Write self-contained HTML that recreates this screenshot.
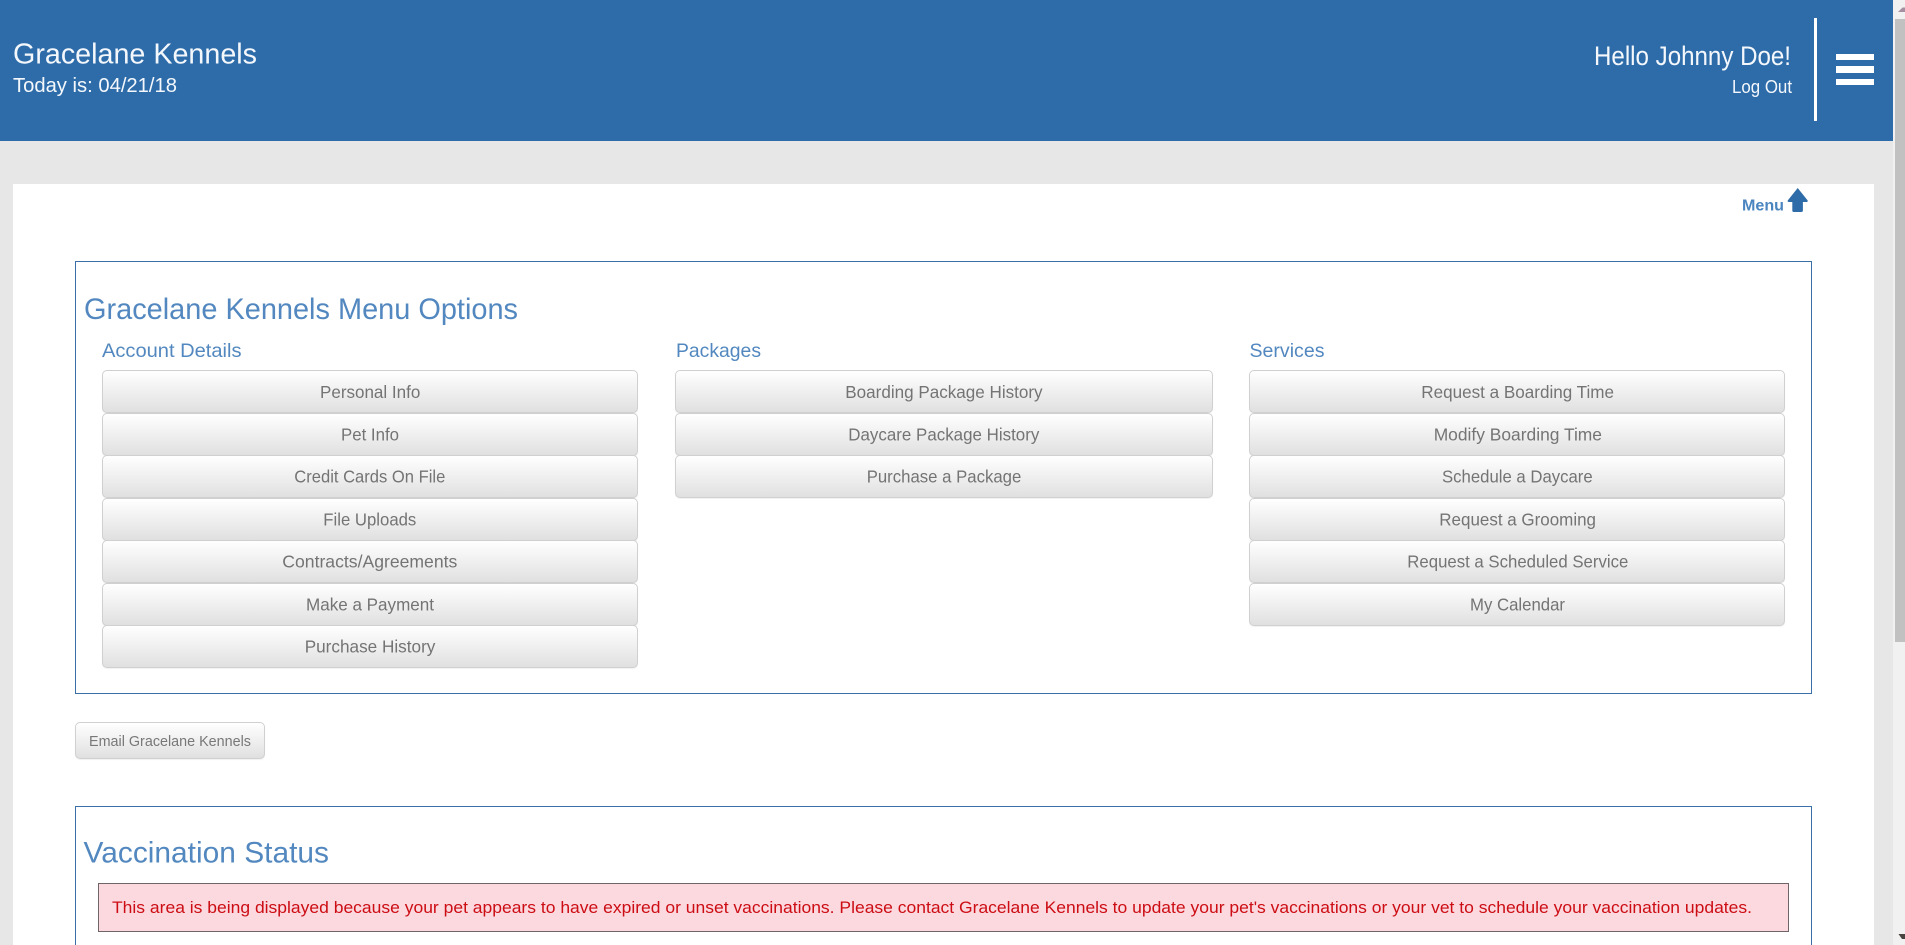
<!DOCTYPE html>
<html lang="en">
<head>
<meta charset="utf-8">
<title>Gracelane Kennels</title>
<style>
html,body{margin:0;padding:0;width:1905px;height:945px;overflow:hidden;background:#e7e7e7;font-family:"Liberation Sans",Arial,sans-serif}
#p{position:absolute;left:0;top:0;width:1905px;height:945px;overflow:hidden}
.a{position:absolute;box-sizing:border-box}
.btn{position:absolute;box-sizing:border-box;height:43px;border:1px solid #d0d0d0;border-radius:5px;background:linear-gradient(to bottom,#fff 0,#e0e0e0 100%);box-shadow:0 1px 1px rgba(0,0,0,.06)}
.c1{left:102px;width:536px}
.c2{left:675px;width:538px}
.c3{left:1249px;width:536px}
svg text{font-family:"Liberation Sans",Arial,sans-serif}
.w{fill:#f4f8fc}
.b{fill:#5288bf}
.g{fill:#747474;font-size:17.7px}
</style>
</head>
<body>
<div id="p">
<div class="a" style="left:0;top:0;width:1893px;height:141px;background:#2e6ca9"></div>
<div class="a" style="left:1814px;top:18px;width:3px;height:103px;background:#fff"></div>
<div class="a" style="left:1836px;top:54px;width:38px;height:6px;background:#fff"></div>
<div class="a" style="left:1836px;top:66px;width:38px;height:7px;background:#fff"></div>
<div class="a" style="left:1836px;top:79px;width:38px;height:6px;background:#fff"></div>

<div class="a" style="left:1893px;top:0;width:12px;height:945px;background:#f1f1f1"></div>
<div class="a" style="left:1895px;top:19px;width:10px;height:623px;background:#c1c1c1"></div>

<div class="a" style="left:13px;top:184px;width:1861px;height:761px;background:#fff"></div>

<div class="a" style="left:75px;top:261px;width:1737px;height:433px;border:1px solid #3a6fa8"></div>
<div class="a" style="left:75px;top:806px;width:1737px;height:139px;border:1px solid #3a6fa8;border-bottom:0"></div>

<div class="btn c1" style="top:370px"></div>
<div class="btn c1" style="top:412.5px"></div>
<div class="btn c1" style="top:455px"></div>
<div class="btn c1" style="top:497.5px"></div>
<div class="btn c1" style="top:540px"></div>
<div class="btn c1" style="top:582.5px"></div>
<div class="btn c1" style="top:625px"></div>

<div class="btn c2" style="top:370px"></div>
<div class="btn c2" style="top:412.5px"></div>
<div class="btn c2" style="top:455px"></div>

<div class="btn c3" style="top:370px"></div>
<div class="btn c3" style="top:412.5px"></div>
<div class="btn c3" style="top:455px"></div>
<div class="btn c3" style="top:497.5px"></div>
<div class="btn c3" style="top:540px"></div>
<div class="btn c3" style="top:582.5px"></div>

<div class="btn" style="left:75px;top:722px;width:190px;height:37px"></div>

<div class="a" style="left:98px;top:883px;width:1691px;height:49px;background:#fcd9df;border:1px solid #6f6468"></div>

<svg class="a" style="left:0;top:0" width="1905" height="945" viewBox="0 0 1905 945" xmlns="http://www.w3.org/2000/svg">
  <text class="w" x="13" y="63.3" font-size="29" textLength="244" lengthAdjust="spacingAndGlyphs">Gracelane Kennels</text>
  <text class="w" x="13" y="92" font-size="20" textLength="164" lengthAdjust="spacingAndGlyphs">Today is: 04/21/18</text>
  <text class="w" x="1594" y="65" font-size="26.5" textLength="197" lengthAdjust="spacingAndGlyphs">Hello Johnny Doe!</text>
  <text class="w" x="1732" y="93" font-size="18.3" textLength="60" lengthAdjust="spacingAndGlyphs">Log Out</text>

  <text x="1742" y="210.5" font-size="15.3" font-weight="700" fill="#4a85bf" textLength="42" lengthAdjust="spacingAndGlyphs">Menu</text>
  <path d="M1797.7 188 L1807.7 200.5 Q1808 202 1806.5 202 L1802.9 202 L1802.9 210.5 Q1802.9 212 1801.4 212 L1793.8 212 Q1792.3 212 1792.3 210.5 L1792.3 202 L1788.9 202 Q1787.4 202 1787.7 200.5 Z" fill="#2e6ca9"/>

  <text class="b" x="84" y="319" font-size="30" textLength="434" lengthAdjust="spacingAndGlyphs">Gracelane Kennels Menu Options</text>
  <text class="b" x="102" y="357" font-size="19.5" textLength="139.5" lengthAdjust="spacingAndGlyphs">Account Details</text>
  <text class="b" x="676" y="357" font-size="19.5" textLength="85" lengthAdjust="spacingAndGlyphs">Packages</text>
  <text class="b" x="1249.5" y="357" font-size="19.5" textLength="75" lengthAdjust="spacingAndGlyphs">Services</text>

  <text class="g" x="320" y="398" textLength="100.3" lengthAdjust="spacingAndGlyphs">Personal Info</text>
  <text class="g" x="341" y="440.7" textLength="58" lengthAdjust="spacingAndGlyphs">Pet Info</text>
  <text class="g" x="294.3" y="482.6" textLength="151" lengthAdjust="spacingAndGlyphs">Credit Cards On File</text>
  <text class="g" x="323.3" y="525.7" textLength="93" lengthAdjust="spacingAndGlyphs">File Uploads</text>
  <text class="g" x="282.3" y="567.6" textLength="175" lengthAdjust="spacingAndGlyphs">Contracts/Agreements</text>
  <text class="g" x="306" y="610.7" textLength="128" lengthAdjust="spacingAndGlyphs">Make a Payment</text>
  <text class="g" x="304.7" y="652.6" textLength="130.7" lengthAdjust="spacingAndGlyphs">Purchase History</text>

  <text class="g" x="845.3" y="398" textLength="197.3" lengthAdjust="spacingAndGlyphs">Boarding Package History</text>
  <text class="g" x="848.3" y="440.7" textLength="191" lengthAdjust="spacingAndGlyphs">Daycare Package History</text>
  <text class="g" x="866.7" y="482.6" textLength="154.6" lengthAdjust="spacingAndGlyphs">Purchase a Package</text>

  <text class="g" x="1421.3" y="398" textLength="192.7" lengthAdjust="spacingAndGlyphs">Request a Boarding Time</text>
  <text class="g" x="1433.7" y="440.7" textLength="168.3" lengthAdjust="spacingAndGlyphs">Modify Boarding Time</text>
  <text class="g" x="1442" y="482.6" textLength="150.7" lengthAdjust="spacingAndGlyphs">Schedule a Daycare</text>
  <text class="g" x="1439.3" y="525.7" textLength="156.7" lengthAdjust="spacingAndGlyphs">Request a Grooming</text>
  <text class="g" x="1407.3" y="567.6" textLength="221" lengthAdjust="spacingAndGlyphs">Request a Scheduled Service</text>
  <text class="g" x="1470" y="610.7" textLength="95" lengthAdjust="spacingAndGlyphs">My Calendar</text>

  <text x="89" y="746" font-size="15" fill="#787878" textLength="162" lengthAdjust="spacingAndGlyphs">Email Gracelane Kennels</text>

  <text class="b" x="83.5" y="862.7" font-size="30" textLength="245.5" lengthAdjust="spacingAndGlyphs">Vaccination Status</text>
  <text x="112" y="913" font-size="16.4" fill="#cc0d14" textLength="1640" lengthAdjust="spacingAndGlyphs">This area is being displayed because your pet appears to have expired or unset vaccinations. Please contact Gracelane Kennels to update your pet's vaccinations or your vet to schedule your vaccination updates.</text>

  <path d="M1898 12 L1905 12 L1905 7.5 L1902.5 7.5 Z" fill="#a58fa0"/>
  <path d="M1898.5 934 L1905 934 L1905 939 L1902 939 Z" fill="#4a4440"/>
</svg>
</div>
</body>
</html>
